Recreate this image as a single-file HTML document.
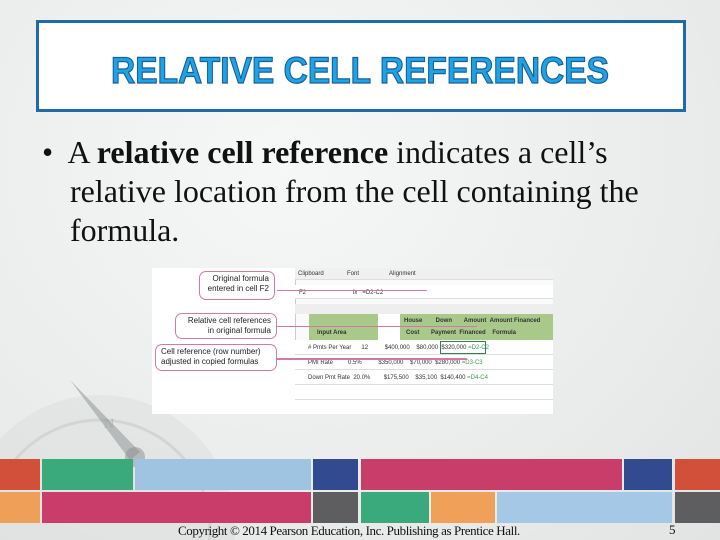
<!DOCTYPE html>
<html style="overflow:hidden;width:720px;height:540px"><head><style>
*{margin:0;padding:0;box-sizing:border-box}
body{width:720px;height:540px;overflow:hidden;position:relative;background:radial-gradient(ellipse at 40% 30%,#f6f7f7,#e9ebeb 70%,#e2e4e4);font-family:"Liberation Sans",sans-serif}
.abs{position:absolute}
.title{left:36px;top:20px;width:650px;height:92px;border:3px solid #1f6aa8;background:#fff}
.body{left:42px;top:133px;width:620px;font-family:"Liberation Serif",serif;font-size:32px;line-height:39px;color:#111}
.b{position:absolute;height:31px}
.c{font-family:"Liberation Serif",serif;font-size:13px;line-height:14px;color:#111}
.ss{left:152px;top:268px;width:401px;height:146px;background:#fff;font-size:6px;color:#333;overflow:hidden}
.call{position:absolute;border:1.5px solid #d07aa5;border-radius:7px;background:#fff;font-size:8px;line-height:10px;text-align:right;padding:2px 5px;color:#222}
.t{position:absolute;font-size:6px;color:#333;white-space:nowrap}
</style></head><body>
<svg class="abs" style="left:0;top:380px" width="260" height="160"><circle cx="100" cy="150" r="135" fill="#dcdede" opacity=".5"/><circle cx="100" cy="150" r="110" fill="none" stroke="#d3d5d5" stroke-width="3"/><polygon points="70,0 130,80 140,72" fill="#9a9d9d" opacity=".6"/><circle cx="135" cy="77" r="10" fill="#8a8d8d" opacity=".5"/><text x="104" y="48" font-size="14" fill="#aaa" font-family="Liberation Serif">N</text></svg>
<div class="abs title"><svg width="644" height="86" style="position:absolute;left:0;top:0"><text x="72" y="60" textLength="498" lengthAdjust="spacingAndGlyphs" font-family="Liberation Sans" font-weight="bold" font-size="37" fill="#1ea3e6" stroke="#1a5f96" stroke-width="1.2">RELATIVE CELL REFERENCES</text></svg></div>
<div class="abs body"><div style="padding-left:28px;text-indent:-28px">•&nbsp; A <b>relative cell reference</b> indicates a cell’s relative location from the cell containing the formula.</div></div>
<div class="abs ss">
<div class="call" style="left:47px;top:3px;width:76px;height:29px">Original formula<br>entered in cell F2</div>
<div class="call" style="left:23px;top:45px;width:102px;height:26px">Relative cell references<br>in original formula</div>
<div class="call" style="left:3px;top:76px;width:122px;height:27px;text-align:left">Cell reference (row number)<br>adjusted in copied formulas</div>
<div class="abs" style="left:143px;top:0;width:258px;height:146px;border-left:1px solid #ccc;background:#fafafa"></div>
<div class="abs" style="left:143px;top:0;width:258px;height:12px;background:#f0f0f0;border-bottom:1px solid #ddd"></div>
<div class="abs" style="left:143px;top:17px;width:258px;height:14px;border-bottom:1px solid #ddd;background:#fff"></div>
<div class="abs" style="left:143px;top:36px;width:258px;height:10px;background:#eee"></div>
<div class="abs" style="left:157px;top:46px;width:244px;height:26px;background:#a9c98a"></div>
<div class="abs" style="left:226px;top:46px;width:22px;height:26px;background:#fff"></div>
<div class="abs" style="left:143px;top:72px;width:258px;height:74px;background:repeating-linear-gradient(#fff 0,#fff 14px,#ddd 14px,#ddd 15px)"></div>
<div class="abs" style="left:288px;top:73px;width:46px;height:13px;border:1.5px solid #3a7a50"></div>
<div class="t" style="left:146px;top:3px">Clipboard&nbsp;&nbsp;&nbsp;&nbsp;&nbsp;&nbsp;&nbsp;&nbsp;&nbsp;&nbsp;&nbsp;&nbsp;&nbsp;&nbsp;Font&nbsp;&nbsp;&nbsp;&nbsp;&nbsp;&nbsp;&nbsp;&nbsp;&nbsp;&nbsp;&nbsp;&nbsp;&nbsp;&nbsp;&nbsp;&nbsp;&nbsp;&nbsp;Alignment</div>
<div class="t" style="left:147px;top:22px">F2&nbsp;&nbsp;&nbsp;&nbsp;&nbsp;&nbsp;&nbsp;&nbsp;&nbsp;&nbsp;&nbsp;&nbsp;&nbsp;&nbsp;&nbsp;&nbsp;&nbsp;&nbsp;&nbsp;&nbsp;&nbsp;&nbsp;&nbsp;&nbsp;&nbsp;&nbsp;&nbsp;&nbsp;fx&nbsp;&nbsp;&nbsp;=D2-C2</div>
<div class="t" style="left:165px;top:62px;font-weight:bold">Input Area</div>
<div class="t" style="left:252px;top:50px;font-weight:bold">House&nbsp;&nbsp;&nbsp;&nbsp;&nbsp;&nbsp;&nbsp;&nbsp;Down&nbsp;&nbsp;&nbsp;&nbsp;&nbsp;&nbsp;&nbsp;Amount&nbsp;&nbsp;Amount Financed</div>
<div class="t" style="left:254px;top:62px;font-weight:bold">Cost&nbsp;&nbsp;&nbsp;&nbsp;&nbsp;&nbsp;&nbsp;Payment&nbsp;&nbsp;Financed&nbsp;&nbsp;&nbsp;&nbsp;Formula</div>
<div class="t" style="left:156px;top:77px"># Pmts Per Year&nbsp;&nbsp;&nbsp;&nbsp;&nbsp;&nbsp;12&nbsp;&nbsp;&nbsp;&nbsp;&nbsp;&nbsp;&nbsp;&nbsp;&nbsp;&nbsp;$400,000&nbsp;&nbsp;&nbsp;&nbsp;$80,000&nbsp;&nbsp;$320,000 <span style="color:#3a9a50">=D2-C2</span></div>
<div class="t" style="left:156px;top:92px">PMI Rate&nbsp;&nbsp;&nbsp;&nbsp;&nbsp;&nbsp;&nbsp;&nbsp;&nbsp;0.5%&nbsp;&nbsp;&nbsp;&nbsp;&nbsp;&nbsp;&nbsp;&nbsp;&nbsp;&nbsp;$350,000&nbsp;&nbsp;&nbsp;&nbsp;$70,000&nbsp;&nbsp;$280,000 <span style="color:#3a9a50">=D3-C3</span></div>
<div class="t" style="left:156px;top:107px">Down Pmt Rate&nbsp;&nbsp;20.0%&nbsp;&nbsp;&nbsp;&nbsp;&nbsp;&nbsp;&nbsp;&nbsp;$175,500&nbsp;&nbsp;&nbsp;&nbsp;$35,100&nbsp;&nbsp;$140,400 <span style="color:#3a9a50">=D4-C4</span></div>
<div class="abs" style="left:125px;top:22px;width:150px;height:1px;background:#d07aa5"></div>
<div class="abs" style="left:125px;top:58px;width:200px;height:1px;background:#d07aa5"></div>
<div class="abs" style="left:125px;top:90px;width:190px;height:2px;background:#d07aa5"></div>
</div>
<div class="b" style="left:0;top:459px;width:40px;background:#d2503a"></div>
<div class="b" style="left:42px;top:459px;width:91px;background:#3aaa7c"></div>
<div class="b" style="left:135px;top:459px;width:176px;background:#9ec4e2"></div>
<div class="b" style="left:313px;top:459px;width:45px;background:#324a90"></div>
<div class="b" style="left:361px;top:459px;width:261px;background:#c83d6a"></div>
<div class="b" style="left:624px;top:459px;width:48px;background:#324a90"></div>
<div class="b" style="left:675px;top:459px;width:45px;background:#d2503a"></div>
<div class="b" style="left:0;top:492px;width:40px;background:#eea058"></div>
<div class="b" style="left:42px;top:492px;width:269px;background:#c83d6a"></div>
<div class="b" style="left:313px;top:492px;width:45px;background:#5e5e60"></div>
<div class="b" style="left:361px;top:492px;width:68px;background:#3aaa7c"></div>
<div class="b" style="left:431px;top:492px;width:64px;background:#f0a058"></div>
<div class="b" style="left:497px;top:492px;width:175px;background:#a4c8e6"></div>
<div class="b" style="left:675px;top:492px;width:45px;background:#5e5e60"></div>
<div class="abs c" style="left:178px;top:524px;letter-spacing:-0.4px">Copyright © 2014 Pearson Education, Inc. Publishing as Prentice Hall.</div>
<div class="abs c" style="left:669px;top:523px">5</div>
</body></html>
